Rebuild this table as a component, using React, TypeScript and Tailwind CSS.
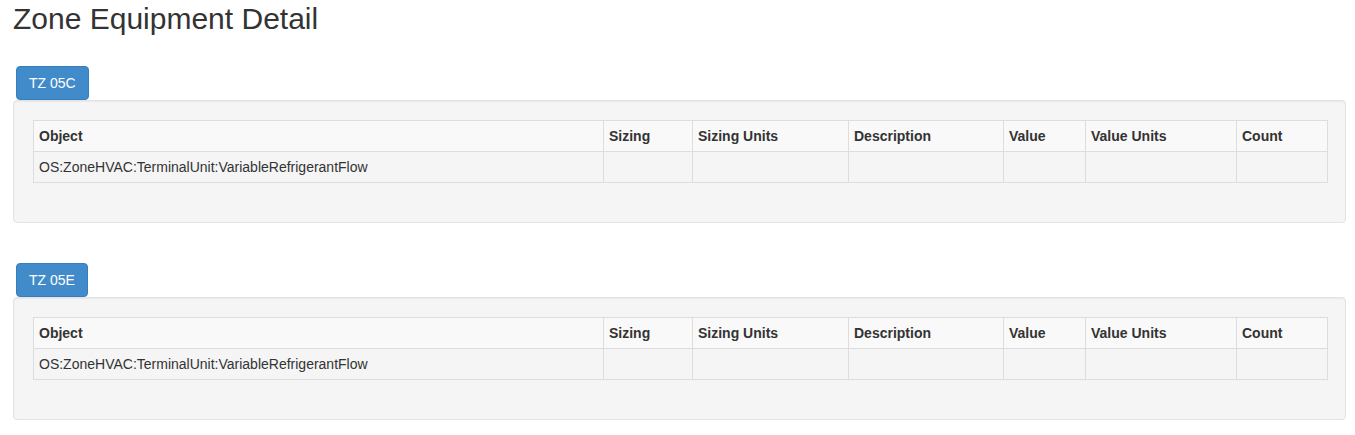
import React from "react";

const cols = [
  { name: "Object", w: "w-[570px]" },
  { name: "Sizing", w: "w-[89px]" },
  { name: "Sizing Units", w: "w-[156px]" },
  { name: "Description", w: "w-[155px]" },
  { name: "Value", w: "w-[82px]" },
  { name: "Value Units", w: "w-[151px]" },
  { name: "Count", w: "w-[91px]" },
];

function Section({ label, first }: { label: string; first?: boolean }) {
  return (
    <div className={first ? "mt-[31px]" : "mt-[40px]"}>
      <button className="ml-[3px] block rounded-[4px] border border-[#357ebd] bg-[#428bca] px-[12px] py-[6px] text-[14px] leading-[20px] text-white">
        {label}
      </button>
      <div className="rounded-[4px] border border-[#e3e3e3] bg-[#f5f5f5] p-[19px] shadow-[inset_0_1px_1px_rgba(0,0,0,0.05)]">
        <table className="mb-[20px] w-[1294px] table-fixed border-collapse border border-[#ddd] text-[14px] leading-[20px] text-[#333]">
          <thead>
            <tr className="bg-[#f9f9f9]">
              {cols.map((c) => (
                <th
                  key={c.name}
                  className={`${c.w} border border-[#ddd] px-[5px] py-[5px] text-left font-bold`}
                >
                  {c.name}
                </th>
              ))}
            </tr>
          </thead>
          <tbody>
            <tr>
              <td className="border border-[#ddd] px-[5px] py-[5px]">
                OS:ZoneHVAC:TerminalUnit:VariableRefrigerantFlow
              </td>
              <td className="border border-[#ddd] px-[5px] py-[5px]"></td>
              <td className="border border-[#ddd] px-[5px] py-[5px]"></td>
              <td className="border border-[#ddd] px-[5px] py-[5px]"></td>
              <td className="border border-[#ddd] px-[5px] py-[5px]"></td>
              <td className="border border-[#ddd] px-[5px] py-[5px]"></td>
              <td className="border border-[#ddd] px-[5px] py-[5px]"></td>
            </tr>
          </tbody>
        </table>
      </div>
    </div>
  );
}

export default function App() {
  return (
    <div
      className="min-h-[435px] bg-white pl-[13px] pr-[9px] text-[#333]"
      style={{ fontFamily: '"Liberation Sans", Arial, Helvetica, sans-serif' }}
    >
      <h2 className="pt-[2px] text-[30px] font-normal leading-[33px] text-[#333]">
        Zone Equipment Detail
      </h2>
      <Section label="TZ 05C" first />
      <Section label="TZ 05E" />
    </div>
  );
}
